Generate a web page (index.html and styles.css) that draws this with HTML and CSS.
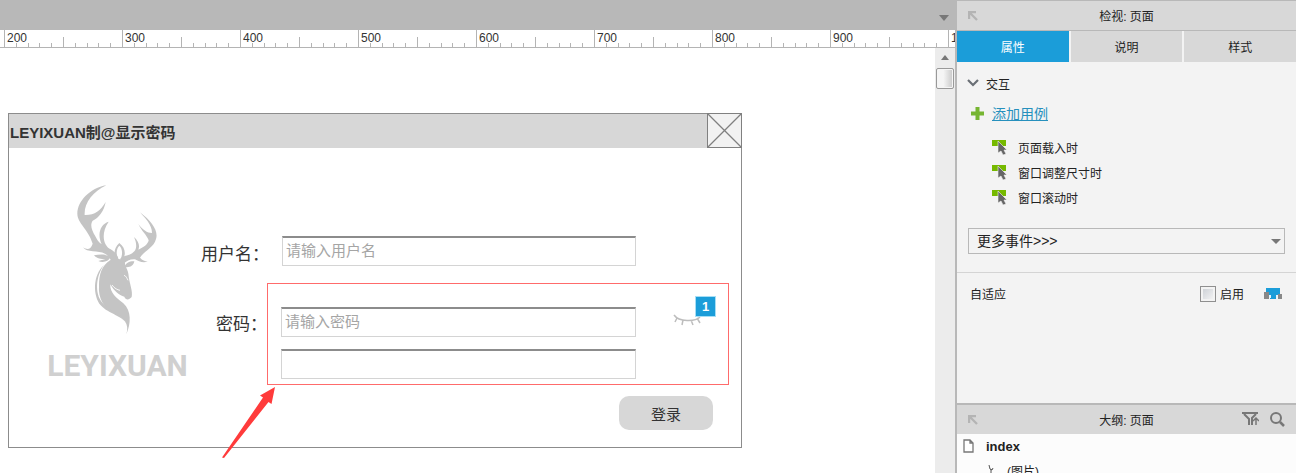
FILE: index.html
```html
<!DOCTYPE html>
<html lang="zh-CN">
<head>
    <meta charset="UTF-8">
    <meta name="viewport" content="width=device-width, initial-scale=1.0">
    <title>显示密码</title>
    <link rel="stylesheet" href="styles.css">
</head>
<body>
    <!-- tick marks for one ruler step -->
    <svg class="defs" width="0" height="0">
        <symbol id="ticks" viewBox="0 0 118 17">
            <path d="M12.5 13v4M24.5 13v4M35.5 13v4M47.5 13v4M59.5 7v10M71.5 13v4M83.5 13v4M94.5 13v4M106.5 13v4" stroke="#b4b4b4" fill="none"/>
        </symbol>
        <symbol id="collapse" viewBox="0 0 10 10">
            <path d="M8 1H1v7M1 1l8 8" stroke="#b4b4b4" stroke-width="2.4" fill="none"/>
        </symbol>
        <symbol id="event" viewBox="0 0 16 16">
            <path d="M0 0h14v6H0z" fill="#76b900"/>
            <path d="M6 1v12l3-2 2 4 3-1-2-4h3z" fill="#666" stroke="#f3f3f3" stroke-width=".6"/>
        </symbol>
    </svg>

    <main class="editor">
        <div class="tab-bar">
            <svg width="10" height="6" viewBox="0 0 10 6"><path d="M0 0h10L5 6z" fill="#777"/></svg>
        </div>
        <div class="ruler">
            <div class="step"><span>200</span><svg><use href="#ticks"/></svg></div>
            <div class="step"><span>300</span><svg><use href="#ticks"/></svg></div>
            <div class="step"><span>400</span><svg><use href="#ticks"/></svg></div>
            <div class="step"><span>500</span><svg><use href="#ticks"/></svg></div>
            <div class="step"><span>600</span><svg><use href="#ticks"/></svg></div>
            <div class="step"><span>700</span><svg><use href="#ticks"/></svg></div>
            <div class="step"><span>800</span><svg><use href="#ticks"/></svg></div>
            <div class="step"><span>900</span><svg><use href="#ticks"/></svg></div>
            <div class="step"><span>1000</span></div>
        </div>
        <div class="workspace">
            <div class="canvas">
                <section class="dialog">
                    <header class="dialog-title">
                        <h1>LEYIXUAN制@显示密码</h1>
                        <button type="button" class="close" aria-label="关闭">
                            <svg width="33" height="33" viewBox="0 0 33 33"><path d="M0 0l33 33M33 0L0 33" stroke="#808080" stroke-width="1.3"/></svg>
                        </button>
                    </header>
                    <div class="dialog-body">
                        <div class="logo">
                            <svg width="85" height="153" viewBox="135 40 255 459" fill="#c4c4c4">
                                <!-- left antler -->
                                <path d="M229 47C180 55 142 95 142 132C142 160 176 180 188 222C183 239 172 242 159 233C170 250 205 242 225 252C237 259 240 270 250 282L266 270C262 252 252 245 242 239C222 229 210 194 236 156C210 163 201 195 215 224C205 218 200 208 196 200C184 180 180 165 188 153C206 145 222 125 227 97C211 124 193 137 164 136C162 100 188 67 229 47Z"/>
                                <!-- right antler -->
                                <path d="M330 128C365 155 386 184 378 208C372 234 342 244 330 264C337 272 345 275 353 275C340 282 325 274 315 269C303 267 290 274 280 282L270 268C285 254 300 260 313 245C322 235 319 217 312 202C326 215 330 228 325 240C340 234 354 224 356 212C350 195 335 185 325 163C337 180 352 190 366 190C366 165 345 145 330 128Z"/>
                                <!-- ears -->
                                <path d="M268 220C252 234 250 252 259 272L264 268C257 250 260 236 268 228C277 236 279 252 272 269L280 268C289 250 284 232 268 220Z"/>
                                <path d="M192 257C210 253 228 252 241 263C236 275 219 281 205 274C212 272 220 271 226 269C213 269 201 267 192 257Z"/>
                                <path d="M313 275C299 274 287 280 283 292C297 295 310 290 313 275Z"/>
                                <!-- head and neck -->
                                <path d="M240 272C252 265 273 264 285 278C283 291 296 300 296 320C299 344 309 365 305 382C296 393 287 391 283 381C267 377 251 363 241 344C239 368 260 386 280 401C305 423 303 462 289 494C299 462 281 443 252 430C221 414 204 386 207 348C207 314 215 289 240 272Z"/>
                                <path d="M222 286C188 316 188 378 212 407C236 434 282 439 292 467C283 434 239 424 217 399C193 371 198 318 222 286Z"/>
                                <path d="M282 317C288 318 291 326 294 332M246 346C254 357 262 360 270 362" stroke="#fff" stroke-width="2.5" fill="none"/>
                            </svg>
                            <p class="logo-text">LEYIXUAN</p>
                        </div>
                        <form class="login">
                            <div class="row">
                                <label for="username">用户名：</label>
                                <div class="field">
                                    <input type="text" id="username" name="username" placeholder="请输入用户名">
                                </div>
                            </div>
                            <div class="row">
                                <label for="password" class="low">密码：</label>
                                <div class="field marked">
                                    <div class="inputs">
                                        <input type="password" id="password" name="password" placeholder="请输入密码">
                                        <input type="text" id="plain" name="plain" aria-label="显示密码">
                                    </div>
                                    <button type="button" class="eye" aria-label="显示密码">
                                        <svg width="28" height="12" viewBox="0 0 28 12"><path d="M1 1C6 8 22 8 27 3M4 4L2 8M10 6L9 11M18 6L20 11M24 4L27 9" stroke="#bdbdbd" stroke-width="1.5" fill="none"/></svg>
                                        <span class="badge">1</span>
                                    </button>
                                    <svg class="arrow" width="54" height="71" viewBox="0 0 54 71"><path d="M53 0L38 8.5 41 10.5 0 70.5 2 71 46.5 15 49.5 17z" fill="#ff3b3b"/></svg>
                                </div>
                            </div>
                            <button type="submit" class="submit">登录</button>
                        </form>
                    </div>
                </section>
            </div>
            <div class="scrollbar">
                <svg width="8" height="5" viewBox="0 0 8 5"><path d="M4 0l4 5H0z" fill="#777"/></svg>
                <div class="thumb"></div>
            </div>
        </div>
    </main>

    <aside class="panel">
        <header class="panel-title first">
            <svg width="10" height="10"><use href="#collapse"/></svg>
            <h2>检视: 页面</h2>
        </header>
        <nav class="tabs">
            <button type="button" class="active">属性</button>
            <button type="button">说明</button>
            <button type="button">样式</button>
        </nav>
        <div class="props">
            <h3 class="group">
                <svg width="12" height="8" viewBox="0 0 12 8"><path d="M1 1l5 5 5-5" stroke="#6a6f75" stroke-width="2.2" fill="none"/></svg>
                交互
            </h3>
            <div class="add-case">
                <svg width="13" height="13" viewBox="0 0 13 13"><path d="M4.500 0h4v4.500H13v4H8.500V13h-4V8.500H0v-4h4.500z" fill="#76b531"/></svg>
                <a href="#">添加用例</a>
            </div>
            <ul class="events">
                <li><svg width="16" height="16"><use href="#event"/></svg>页面载入时</li>
                <li><svg width="16" height="16"><use href="#event"/></svg>窗口调整尺寸时</li>
                <li><svg width="16" height="16"><use href="#event"/></svg>窗口滚动时</li>
            </ul>
            <div class="more">
                <select aria-label="更多事件">
                    <option>更多事件&gt;&gt;&gt;</option>
                </select>
                <svg width="10" height="5" viewBox="0 0 10 5"><path d="M0 0h10L5 5z" fill="#777"/></svg>
            </div>
            <div class="adaptive">
                <span>自适应</span>
                <input type="checkbox" id="enable">
                <label for="enable">启用</label>
                <svg width="18" height="12" viewBox="0 0 18 12">
                    <path d="M2 0h14v8H2zM6 8h6v3H6z" fill="#1b9dd9"/>
                    <path d="M0 4h5v7H0zM14 6h4v5h-4z" fill="#888"/>
                    <path d="M5 7h2v3H5zM12 7h2v3h-2z" fill="#e8f4fa"/>
                </svg>
            </div>
        </div>
        <div class="outline">
            <header class="panel-title">
                <svg width="10" height="10"><use href="#collapse"/></svg>
                <h2>大纲: 页面</h2>
                <div class="tools">
                    <svg width="17" height="14" viewBox="0 0 17 14" fill="none" stroke="#777" stroke-width="2"><path d="M0 1h16M2 2l5 5v6M14 2l-4 4v7"/><path d="M14 13V6M11 9l3-3 3 3" stroke-width="1.5"/></svg>
                    <svg width="15" height="15" viewBox="0 0 15 15" fill="none" stroke="#777" stroke-width="2"><circle cx="6" cy="6" r="5"/><path d="M10 10l4 4" stroke-width="2.5"/></svg>
                </div>
            </header>
            <ul class="tree">
                <li class="root"><svg width="11" height="14" viewBox="0 0 11 14"><path d="M1 1h6l3 3v9H1zM7 1v3h3" fill="#fff" stroke="#777" stroke-width="1.3"/></svg>index</li>
                <li class="child"><svg width="6" height="12" viewBox="0 0 6 12"><path d="M1 1l1 4 2 1 1-2M3 5v7" stroke="#555" fill="none"/></svg>(图片)</li>
            </ul>
        </div>
    </aside>
</body>
</html>
```
FILE: styles.css
```css
* {
    box-sizing: border-box;
}

body {
    display: flex;
    height: 100vh;
    margin: 0;
    overflow: hidden;
    font-family: "Liberation Sans", "Noto Sans CJK SC", sans-serif;
    font-size: 12px;
    color: #333;
    background-color: #fff;
}

h1, h2, h3, p, ul {
    margin: 0;
    padding: 0;
    font-size: 12px;
    font-weight: normal;
}

ul {
    list-style: none;
}

button, input, select {
    font-family: inherit;
    padding: 0;
    margin: 0;
}

svg {
    display: block;
    flex: none;
}

.defs {
    position: absolute;
}

/* editor */
.editor {
    display: flex;
    flex-direction: column;
    flex: 1;
    min-width: 0;
}

.tab-bar {
    display: flex;
    justify-content: flex-end;
    align-items: center;
    height: 30px;
    padding: 6px 6px 0 0;
    background-color: #b8b8b8;
}

.ruler {
    display: flex;
    height: 18px;
    padding-left: 4px;
    overflow: hidden;
    border-bottom: 1px solid #b4b4b4;
}

.step {
    display: grid;
    flex: 0 0 118px;
    height: 17px;
    box-shadow: inset 1px 0 #b4b4b4;
}

.step span,
.step svg {
    grid-area: 1 / 1;
    width: 118px;
    height: 17px;
}

.step span {
    padding-left: 3px;
    line-height: 16px;
}

.workspace {
    display: flex;
    flex: 1;
    min-height: 0;
}

.canvas {
    flex: 1;
    padding: 65px 8px 0 8px;
}

.scrollbar {
    display: flex;
    flex-direction: column;
    align-items: center;
    gap: 8px;
    width: 20px;
    padding-top: 7px;
    background-color: #ececec;
}

.thumb {
    width: 18px;
    height: 21px;
    border: 1px solid #999;
    border-radius: 2px;
    background: linear-gradient(to right, #f5f5f5 40%, #c8c8c8);
    box-shadow: inset 0 0 0 1px #f5f5f5;
}

/* login dialog */
.dialog {
    max-width: 734px;
    border: 1px solid #8c8c8c;
    background-color: #fff;
}

.dialog-title {
    display: flex;
    justify-content: space-between;
    align-items: center;
    height: 34px;
    background-color: #d7d7d7;
}

.dialog-title h1 {
    padding-left: 1px;
    font-size: 15px;
    font-weight: bold;
}

.close {
    width: 35px;
    height: 35px;
    margin: -1px -1px 0 0;
    border: 1px solid #808080;
    background-color: #f2f2f2;
}

.dialog-body {
    display: flex;
    padding: 35px 12px 17px 38px;
}

.logo {
    display: flex;
    flex-direction: column;
    align-items: center;
    width: 141px;
}

.logo-text {
    margin-top: 10px;
    font-family: Roboto, "Liberation Sans", sans-serif;
    font-size: 30px;
    font-weight: bold;
    line-height: 40px;
    color: #d0d0d0;
}

.login {
    display: flex;
    flex-direction: column;
    flex: 1;
    padding: 53px 0 0 13px;
}

.row {
    display: flex;
}

.row label {
    width: 66px;
    padding-top: 7px;
    font-size: 17px;
    line-height: 24px;
    text-align: right;
    white-space: nowrap;
}

.row .low {
    padding-top: 46px;
}

.field {
    display: flex;
    flex: 1;
    justify-content: space-between;
    padding: 0 93px 0 15px;
}

.field input {
    width: 100%;
    height: 30px;
    padding: 0 0 2px 3px;
    border: 1px solid #d4d4d4;
    border-top: 2px solid #8c8c8c;
    outline: none;
    font-size: 15px;
    background-color: #fff;
}

.field input::placeholder {
    color: #a5a5a5;
}

.marked {
    position: relative;
    margin-top: 16px;
    padding: 23px 13px 5px 13px;
    border: 1px solid #ff6b6b;
}

.inputs {
    display: flex;
    flex-direction: column;
    flex: 1;
    gap: 12px;
}

.eye {
    position: relative;
    width: 28px;
    height: 12px;
    margin: 7px 14px 0 37px;
    border: none;
    background: none;
}

.badge {
    position: absolute;
    right: -15px;
    bottom: 9px;
    width: 21px;
    height: 21px;
    border: 1px solid #a6def5;
    font-size: 13px;
    font-weight: bold;
    line-height: 19px;
    color: #fff;
    background-color: #1b9dd9;
}

.arrow {
    position: absolute;
    right: 452px;
    top: 103px;
}

.submit {
    align-self: flex-end;
    width: 94px;
    height: 34px;
    margin: 11px 16px 0 0;
    border: none;
    border-radius: 10px;
    font-size: 15px;
    color: #333;
    background-color: #d7d7d7;
}

/* right panel */
.panel {
    display: flex;
    flex-direction: column;
    flex: 0 0 341px;
    border-left: 2px solid #b8b8b8;
    color: #222;
    background-color: #f3f3f3;
}

.panel-title {
    display: grid;
    grid-template-columns: 48px 1fr 48px;
    align-items: center;
    height: 31px;
    padding: 0 11px;
    border-top: 2px solid #b8b8b8;
    background-color: #d8d8d8;
}

.panel-title h2 {
    text-align: center;
}

.first {
    border-top: 1px solid #b8b8b8;
    border-bottom: 1px solid #b8b8b8;
}

.tabs {
    display: flex;
    gap: 2px;
}

.tabs button {
    flex: 1;
    height: 31px;
    border: none;
    font-size: 12px;
    color: #222;
    background-color: #d8d8d8;
}

.tabs .active {
    color: #fff;
    background-color: #1b9dd9;
}

.props {
    flex: 1;
    min-height: 0;
    padding-top: 11px;
}

.group {
    display: flex;
    align-items: center;
    gap: 7px;
    height: 20px;
    padding-left: 10px;
}

.add-case {
    display: flex;
    align-items: center;
    gap: 8px;
    height: 24px;
    margin: 8px 0 10px;
    padding-left: 14px;
}

.add-case a {
    font-size: 14px;
    color: #2690bd;
}

.events li {
    display: flex;
    align-items: center;
    gap: 10px;
    height: 25px;
    padding-left: 35px;
}

.more {
    display: grid;
    align-items: center;
    margin: 18px 11px 18px;
}

.more select,
.more svg {
    grid-area: 1 / 1;
}

.more select {
    appearance: none;
    height: 26px;
    padding: 0 8px;
    border: 1px solid #b8b8b8;
    border-radius: 0;
    font-size: 14px;
    color: #222;
    background-color: #f3f3f3;
}

.more svg {
    justify-self: end;
    margin-right: 4px;
    pointer-events: none;
}

.adaptive {
    display: flex;
    align-items: center;
    height: 42px;
    padding: 0 14px 0 13px;
    border-top: 1px solid #d4d4d4;
}

.adaptive span {
    flex: 1;
}

.adaptive input {
    appearance: none;
    width: 16px;
    height: 16px;
    margin-right: 4px;
    border: 1px solid #8f8f8f;
    background: linear-gradient(135deg, #c8ccd2, #f8f8f8);
    box-shadow: inset 0 0 0 2px #f3f3f3;
}

.adaptive label {
    margin-right: 20px;
}

.outline {
    flex: 0 0 70px;
    overflow: hidden;
    background-color: #fcfcfc;
}

.tools {
    display: flex;
    justify-content: flex-end;
    gap: 11px;
}

.tree li {
    display: flex;
    align-items: center;
    height: 24px;
}

.tree .root {
    gap: 12px;
    padding-left: 6px;
    font-size: 13px;
    font-weight: bold;
}

.tree .child {
    gap: 13px;
    padding-left: 31px;
}
```
